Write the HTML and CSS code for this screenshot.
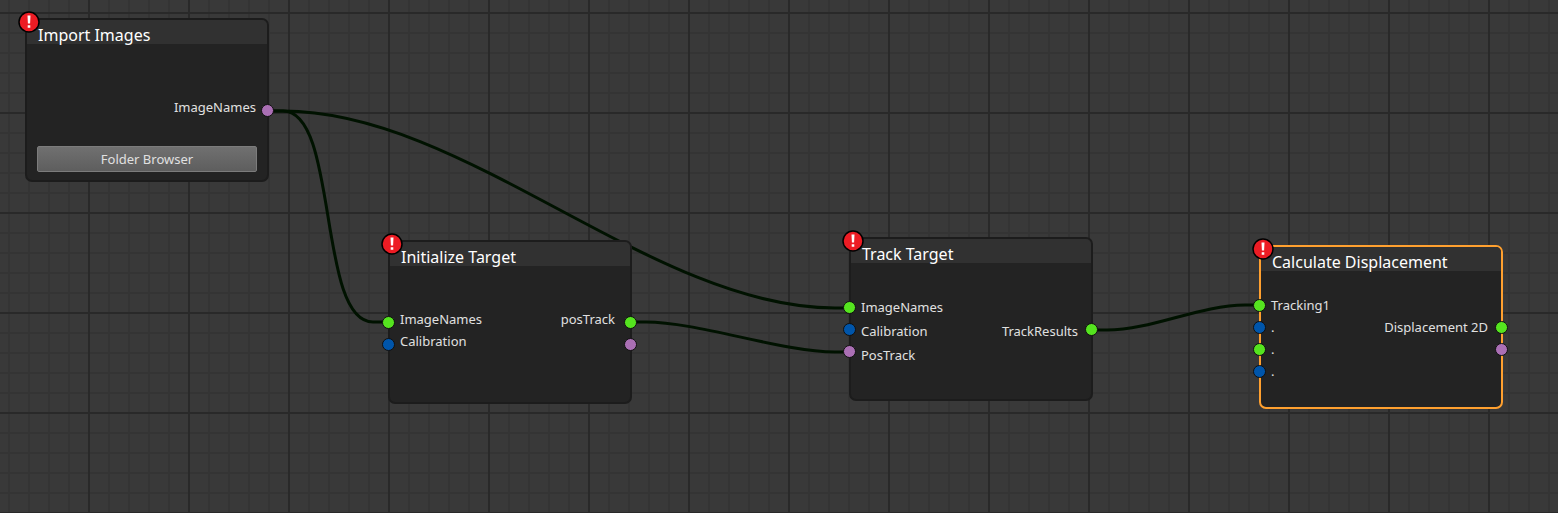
FILE: index.html
```html
<!DOCTYPE html>
<html lang="en">
<head>
<meta charset="utf-8">
<title>Node editor</title>
<link rel="stylesheet" href="styles.css">
</head>
<body>
<main class="canvas">
  <svg class="wires" aria-hidden="true">
    <path d="M268 111H283C339 111 317 322 373 322H388"/>
    <path d="M268 111H283C466 111 652 308 835 308H850"/>
    <path d="M631 322H646C698 322 782 352 835 352H850"/>
    <path d="M1092 330H1107C1152 330 1200 305 1245 305H1260"/>
  </svg>

  <section class="node node-import">
    <span class="alert"><svg viewBox="0 0 22 22" aria-hidden="true"><circle cx="11" cy="11" r="10"/><path d="M9.500 4.500h3l-.400 8h-2.200zM9.700 14.200h2.600v2.600H9.700z"/></svg></span>
    <h2 class="title">Import Images</h2>
    <div class="body">
      <div class="labels outputs"><span>ImageNames</span></div>
      <div class="pins right"><i class="pin violet"></i></div>
    </div>
    <button class="browse" type="button">Folder Browser</button>
  </section>

  <section class="node node-init">
    <span class="alert"><svg viewBox="0 0 22 22" aria-hidden="true"><circle cx="11" cy="11" r="10"/><path d="M9.500 4.500h3l-.400 8h-2.200zM9.700 14.200h2.600v2.600H9.700z"/></svg></span>
    <h2 class="title">Initialize Target</h2>
    <div class="body">
      <div class="pins left"><i class="pin green"></i><i class="pin blue"></i></div>
      <div class="labels"><span>ImageNames</span><span>Calibration</span></div>
      <div class="labels outputs"><span>posTrack</span></div>
      <div class="pins right"><i class="pin green"></i><i class="pin violet"></i></div>
    </div>
  </section>

  <section class="node node-track">
    <span class="alert"><svg viewBox="0 0 22 22" aria-hidden="true"><circle cx="11" cy="11" r="10"/><path d="M9.500 4.500h3l-.400 8h-2.200zM9.700 14.200h2.600v2.600H9.700z"/></svg></span>
    <h2 class="title">Track Target</h2>
    <div class="body">
      <div class="pins left"><i class="pin green"></i><i class="pin blue"></i><i class="pin violet"></i></div>
      <div class="labels loose"><span>ImageNames</span><span>Calibration</span><span>PosTrack</span></div>
      <div class="labels loose outputs"><span></span><span>TrackResults</span></div>
      <div class="pins right"><i class="pin spacer"></i><i class="pin green"></i></div>
    </div>
  </section>

  <section class="node node-calc selected">
    <span class="alert"><svg viewBox="0 0 22 22" aria-hidden="true"><circle cx="11" cy="11" r="10"/><path d="M9.500 4.500h3l-.400 8h-2.200zM9.700 14.200h2.600v2.600H9.700z"/></svg></span>
    <h2 class="title">Calculate Displacement</h2>
    <div class="body">
      <div class="pins left"><i class="pin green"></i><i class="pin blue"></i><i class="pin green"></i><i class="pin blue"></i></div>
      <div class="labels"><span>Tracking1</span><span>.</span><span>.</span><span>.</span></div>
      <div class="labels outputs"><span></span><span>Displacement 2D</span></div>
      <div class="pins right"><i class="pin spacer"></i><i class="pin green"></i><i class="pin violet"></i></div>
    </div>
  </section>
</main>
</body>
</html>
```
FILE: styles.css
```css
* { box-sizing: border-box; }

body {
  margin: 0;
  font: 13px/22px "Noto Sans", "Liberation Sans", sans-serif;
  color: #e0e0e0;
}

.canvas {
  position: relative;
  min-height: 100vh;
  overflow: hidden;
  background-color: #393939;
  background-image:
    linear-gradient(#292929 2px, transparent 2px),
    linear-gradient(90deg, #292929 2px, transparent 2px),
    linear-gradient(#343434 2px, transparent 2px),
    linear-gradient(90deg, #343434 2px, transparent 2px);
  background-size: 100px 100px, 100px 100px, 20px 20px, 20px 20px;
  background-position: 0 12px, 88px 0, 0 12px, 8px 0;
}

.wires {
  position: absolute;
  inset: 0;
  width: 100%;
  height: 100%;
  fill: none;
  stroke: #001200;
  stroke-width: 3;
}

.node {
  position: absolute;
  display: flex;
  flex-direction: column;
  width: 244px;
  min-height: 164px;
  border: 2px solid #1c1c1c;
  border-radius: 7px;
  background: #232323;
}

.node-import { left: 25px; top: 18px; }
.node-init { left: 388px; top: 240px; }
.node-track { left: 849px; top: 237px; }
.node-calc { left: 1259px; top: 245px; }
.selected { border-color: #ffa02f; }

.title {
  margin: 0;
  padding: 4px 11px 0;
  height: 24px;
  border-radius: 5px 5px 0 0;
  background: #313131;
  color: #fff;
  font-size: 16px;
  font-weight: 400;
  line-height: 22px;
}

.alert {
  position: absolute;
  left: -9px;
  top: -9px;
  width: 22px;
  height: 22px;
}

.alert svg { display: block; }
.alert circle { fill: #ed1c24; stroke: #000; stroke-width: 1.5; }
.alert path { fill: #fff; }

.body { display: flex; flex: 1; }
.node-import .body { padding-top: 52px; }
.node-init .body { padding-top: 42px; }
.node-track .body { padding-top: 33px; }
.node-calc .body { padding-top: 23px; }

.pins, .labels { display: flex; flex-direction: column; }
.pins { gap: 9px; padding-top: 5px; }
.node-import .pins, .node-init .pins { padding-top: 8px; }
.pins.left { margin-left: -8px; }
.pins.right { margin-right: -7px; }

.pin {
  width: 13px;
  height: 13px;
  border: 1px solid #101010;
  border-radius: 50%;
}

.green { background: #55e41f; }
.blue { background: #0055aa; }
.violet { background: #aa6fb4; }
.spacer { visibility: hidden; }

.labels { padding: 0 5px; }
.labels span { height: 22px; }
.loose { gap: 2px; }
.outputs { margin-left: auto; padding-right: 7px; text-align: right; }
.node-import .outputs { padding-right: 5px; }
.node-init .outputs { padding-right: 9px; }

.browse {
  height: 26px;
  margin: 0 10px 8px;
  border: 1px solid #7c7c7c;
  border-radius: 2px;
  background: linear-gradient(#707070, #5e5e5e);
  color: #e0e0e0;
  font: inherit;
}
```
